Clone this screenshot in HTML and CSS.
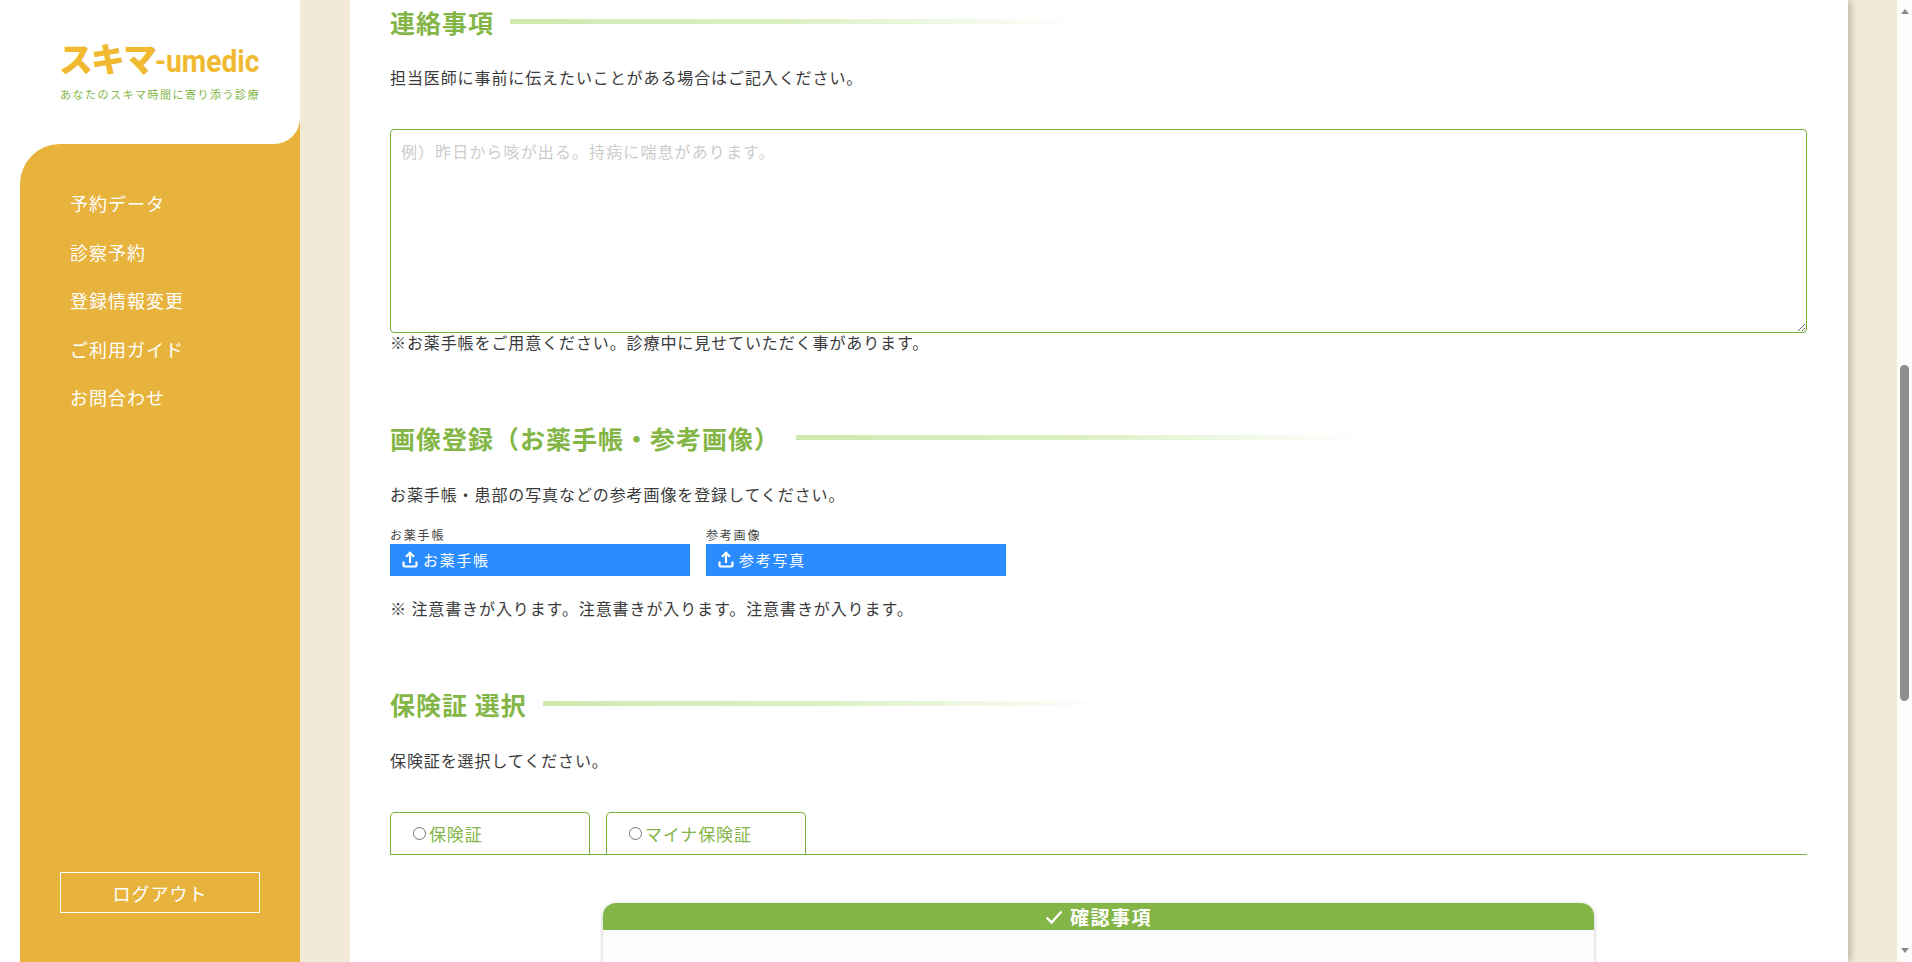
FILE: index.html
```html
<!DOCTYPE html>
<html lang="ja">
<head>
<meta charset="utf-8">
<title>スキマ-umedic</title>
<link rel="stylesheet" href="styles.css">
</head>
<body>
<div class="app">
  <aside class="sidebar">
    <div class="brand">
      <div class="logo"><span class="logo-kana">スキマ</span><span class="logo-latin">-umedic</span></div>
      <div class="tagline">あなたのスキマ時間に寄り添う診療</div>
    </div>
    <nav class="nav">
      <ul class="nav-list">
        <li>予約データ</li>
        <li>診察予約</li>
        <li>登録情報変更</li>
        <li>ご利用ガイド</li>
        <li>お問合わせ</li>
      </ul>
      <button class="logout">ログアウト</button>
    </nav>
  </aside>
  <div class="gutter">
    <main class="content">
      <section class="sec sec-contact">
        <h2 class="title"><span>連絡事項</span></h2>
        <p class="lead">担当医師に事前に伝えたいことがある場合はご記入ください。</p>
        <textarea class="memo" placeholder="例）昨日から咳が出る。持病に喘息があります。"></textarea>
        <p class="note">※お薬手帳をご用意ください。診療中に見せていただく事があります。</p>
      </section>
      <section class="sec sec-image">
        <h2 class="title"><span>画像登録（お薬手帳・参考画像）</span></h2>
        <p class="lead">お薬手帳・患部の写真などの参考画像を登録してください。</p>
        <div class="uploads">
          <div class="upload">
            <div class="upload-label">お薬手帳</div>
            <div class="upload-btn"><svg class="up-icon" viewBox="0 0 16 17"><path d="M8 12V2M4 5.8 8 1.8l4 4M1.5 10.5v4c0 .6.4 1 1 1h11c.6 0 1-.4 1-1v-4"/></svg>お薬手帳</div>
          </div>
          <div class="upload">
            <div class="upload-label">参考画像</div>
            <div class="upload-btn"><svg class="up-icon" viewBox="0 0 16 17"><path d="M8 12V2M4 5.8 8 1.8l4 4M1.5 10.5v4c0 .6.4 1 1 1h11c.6 0 1-.4 1-1v-4"/></svg>参考写真</div>
          </div>
        </div>
        <p class="caution">※ 注意書きが入ります。注意書きが入ります。注意書きが入ります。</p>
      </section>
      <section class="sec sec-card">
        <h2 class="title"><span>保険証 選択</span></h2>
        <p class="lead">保険証を選択してください。</p>
        <div class="tabs">
          <div class="tab"><i class="radio"></i>保険証</div>
          <div class="tab"><i class="radio"></i>マイナ保険証</div>
        </div>
        <div class="confirm">
          <div class="confirm-head"><svg class="check" viewBox="0 0 18 14"><path d="M1.5 7.5 6.5 12.5 16.5 1.5"/></svg>確認事項</div>
          <div class="confirm-body">お薬</div>
        </div>
      </section>
    </main>
  </div>
  <div class="scrollbar">
    <span class="arrow arrow-up"></span>
    <div class="track"><div class="thumb"></div></div>
    <span class="arrow arrow-down"></span>
  </div>
</div>
</body>
</html>
```
FILE: styles.css
```css
* { box-sizing: border-box; }
html, body { margin: 0; height: 100%; overflow: hidden; }
body {
  font-family: "Noto Sans CJK JP", "Noto Sans", sans-serif;
  color: #333;
  background: #f2e9d6;
}
.app { display: flex; height: 962px; width: 1912px; }

/* sidebar */
.sidebar { width: 300px; flex: none; background: #fff; display: flex; flex-direction: column; position: relative; }
.brand {
  height: 144px; background: #fff; border-bottom-right-radius: 26px;
  padding: 38px 0 0 60px; position: relative; z-index: 1;
}
.sidebar::before {
  content: ""; position: absolute; left: 270px; top: 114px; width: 30px; height: 30px; background: #e7b33c;
}
.logo { display: flex; align-items: baseline; font-size: 32px; line-height: 40px; color: #f0b92f; white-space: nowrap; }
.logo-kana { font-size: 34px; font-weight: 900; letter-spacing: -2px; margin-left: -1px; }
.logo-latin { display: inline-block; font-family: Roboto, sans-serif; font-weight: 700; font-size: 32px; transform: scaleX(.88); transform-origin: left center; }
.tagline { margin-top: 5px; font-size: 11px; line-height: 16px; color: #83b646; letter-spacing: 1.5px; white-space: nowrap; }
.nav {
  flex: 1; margin-left: 20px; background: #e7b33c; border-top-left-radius: 40px;
  padding: 35px 0 49px 50px; display: flex; flex-direction: column; justify-content: space-between;
}
.nav-list { list-style: none; margin: 0; padding: 0; color: #fff; font-size: 18px; letter-spacing: 1px; }
.nav-list li { height: 48.5px; line-height: 48px; }
.logout {
  width: 200px; height: 41px; margin: 0 0 0 -10px; background: transparent; border: 1px solid #fff;
  color: #fff; font: inherit; font-size: 18px; letter-spacing: 1px; padding: 0;
}

/* main */
.gutter { flex: 1; min-width: 0; padding: 0 49px 0 50px; }
.content {
  background: #fff; height: 962px; overflow: hidden; padding: 0 41px 0 40px;
  box-shadow: 5px 0 6px -1px rgba(0, 0, 0, .18);
}
.sec { display: block; }
.title { margin: 0; height: 36px; display: flex; align-items: center; font-size: 25px; line-height: 36px; font-weight: 700; letter-spacing: 1px; color: #83b646; }
.title span { flex: none; margin-top: -3px; }
.title::after {
  content: ""; width: 565px; height: 5px; margin-left: 16px; margin-top: -3px;
  background: linear-gradient(90deg, #cfe9ae 0%, #dcf0c4 50%, rgba(255, 255, 255, 0) 100%);
}
.lead, .note, .caution { margin: 0; font-size: 16px; letter-spacing: .9px; line-height: 24px; color: #3a3a3a; }
.sec-contact { padding-top: 5px; }
.sec-contact .lead { margin-top: 24px; }
.memo {
  display: block; width: 100%; height: 204px; margin: 40px 0 0; padding: 9px 10px; resize: vertical;
  border: 1px solid #78b239; border-radius: 4px; outline: 0;
  font: inherit; font-size: 16px; letter-spacing: 1.1px; line-height: 24px;
}
.memo::placeholder { color: #ccc; opacity: 1; }
.note { margin-top: -3px; }
.sec-image { padding-top: 67px; }
.sec-image .lead { margin-top: 25px; }
.uploads { display: flex; gap: 16px; margin-top: 21px; }
.upload { width: 300px; }
.upload-label { font-size: 12px; line-height: 15px; margin-bottom: 2px; letter-spacing: 1.8px; color: #444; }
.upload-btn {
  height: 32px; background: #2b8cff; color: #fff; display: flex; align-items: center;
  padding: 0 0 2px 12px; font-size: 15px; letter-spacing: 1.7px;
}
.up-icon { width: 16px; height: 17px; margin-right: 5px; fill: none; stroke: #fff; stroke-width: 2.2; }
.caution { margin-top: 20px; }
.sec-card { padding-top: 67px; }
.sec-card .lead { margin-top: 25px; }
.tabs { display: flex; gap: 16px; margin: 40px 0 0; border-bottom: 1px solid #78b239; height: 43px; }
.tab {
  width: 200px; height: 42px; border: 1px solid #78b239; border-bottom: 0; border-radius: 5px 5px 0 0;
  padding-left: 22px; display: flex; align-items: center; color: #83b646; font-size: 17px; letter-spacing: .85px;
}
.radio { width: 13px; height: 13px; border: 1px solid #767676; border-radius: 50%; margin-right: 3px; flex: none; }
.confirm { width: 991px; margin: 48px 0 0 213px; box-shadow: 0 1px 4px rgba(0, 0, 0, .25); border-radius: 13px 13px 0 0; }
.confirm-head {
  height: 27px; background: #83b646; border-radius: 13px 13px 0 0; display: flex; align-items: center; justify-content: center;
  color: #fff; font-size: 19px; font-weight: 700; letter-spacing: 1.5px;
}
.check { width: 18px; height: 14px; margin-right: 7px; fill: none; stroke: #fff; stroke-width: 2.4; }
.confirm-body { background: #fcfcfc; height: 60px; padding: 27px 18px; font-size: 16px; line-height: 24px; letter-spacing: .9px; }

/* scrollbar */
.scrollbar { width: 15px; flex: none; background: #fcfcfc; display: flex; flex-direction: column; align-items: center; padding: 9px 0 9px; }
.arrow { width: 0; height: 0; border-left: 4.5px solid transparent; border-right: 4.5px solid transparent; flex: none; }
.arrow-up { border-bottom: 5px solid #8a8a8a; }
.arrow-down { border-top: 5px solid #8a8a8a; }
.track { flex: 1; width: 9px; padding-top: 351px; }
.thumb { width: 9px; height: 336px; border-radius: 5px; background: #8e8e8e; }
```
